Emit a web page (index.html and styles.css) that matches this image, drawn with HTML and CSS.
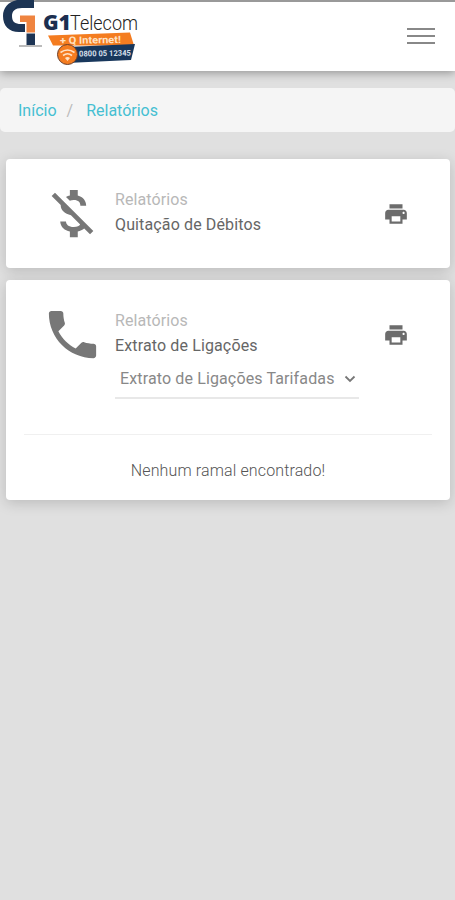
FILE: index.html
```html
<!DOCTYPE html>
<html lang="pt-BR">
<head>
<meta charset="utf-8">
<meta name="viewport" content="width=device-width, initial-scale=1">
<title>Relatórios</title>
<link rel="stylesheet" href="styles.css">
</head>
<body>
<header class="topbar">
  <svg class="logo" width="150" height="70" viewBox="0 0 150 70" role="img" aria-label="G1 Telecom">
    <path d="M17 0h17v8H22C15 8 12 11 12 16c0 6 3 8 9 8h4v8h-6C9 32 3 26 3 16 3 8 8 2 17 0z" fill="#1c3454"/>
    <path d="M20 15.500h15v17h-8.500V22H20z" fill="#ef8440"/>
    <path d="M26.500 33.500H35V45h-8.500z" fill="#1c3454"/>
    <path d="M19 45h23v2H19z" fill="#bbb"/>
    <text class="logo-g1" x="43" y="29.500" textLength="28" lengthAdjust="spacingAndGlyphs">G1</text>
    <text class="logo-name" x="70" y="29.500" textLength="68" lengthAdjust="spacingAndGlyphs">Telecom</text>
    <path d="M48 35.500L130 32.500l4 13H53z" fill="#f47c20"/>
    <path d="M67 47l68-3-4 16-64 3z" fill="#18375c"/>
    <text class="logo-tag" x="60" y="44" textLength="61" lengthAdjust="spacingAndGlyphs" transform="rotate(-1 60 44)">+ Q Internet!</text>
    <text class="logo-phone" x="79" y="56.500" textLength="52" lengthAdjust="spacingAndGlyphs" transform="rotate(-1 79 56)">0800 05 12345</text>
    <circle cx="67.500" cy="54.500" r="10" fill="#f47c20" stroke="#6b3f2a"/>
    <path d="M60.500 52.500q7-5 14 0M63 55.500q4.500-3.500 9 0" fill="none" stroke="#ffe2c4" stroke-width="1.600"/>
    <path d="M65 58q2.500-2 5 0l-2.500 3z" fill="#ffe2c4"/>
  </svg>
  <button class="menu" aria-label="Menu"><span></span><span></span><span></span></button>
</header>
<nav class="breadcrumb"><a>Início</a><span class="slash">/</span><a>Relatórios</a></nav>
<main>
  <section class="card card-debits">
    <div class="row">
      <svg class="icon" viewBox="0 0 24 24"><path d="M12.500 6.900c1.780 0 2.440.85 2.500 2.100h2.210c-.07-1.720-1.120-3.300-3.210-3.810V3h-3v2.160c-.53.12-1.030.3-1.480.54l1.470 1.470c.41-.17.91-.27 1.510-.27zM5.330 4.060L4.060 5.330 7.500 8.770c0 2.080 1.560 3.210 3.910 3.910l3.510 3.510c-.34.48-1.050.91-2.420.91-2.060 0-2.870-.92-2.980-2.100h-2.200c.12 2.190 1.760 3.420 3.680 3.830V21h3v-2.150c.96-.18 1.820-.55 2.450-1.120l2.220 2.220 1.270-1.270L5.330 4.060z"/></svg>
      <div class="info"><p class="category">Relatórios</p><h2>Quitação de Débitos</h2></div>
      <svg class="print" viewBox="0 0 24 24"><path d="M19 8H5c-1.660 0-3 1.340-3 3v6h4v4h12v-4h4v-6c0-1.660-1.340-3-3-3zm-3 11H8v-5h8v5zm3-7c-.55 0-1-.45-1-1s.45-1 1-1 1 .45 1 1-.45 1-1 1zm-1-9H6v4h12V3z"/></svg>
    </div>
  </section>
  <section class="card card-calls">
    <div class="row">
      <svg class="icon" viewBox="0 0 24 24"><path d="M6.620 10.790c1.440 2.830 3.760 5.140 6.590 6.590l2.200-2.200c.27-.27.67-.36 1.020-.24 1.120.37 2.330.57 3.570.57.55 0 1 .45 1 1V20c0 .55-.45 1-1 1-9.390 0-17-7.610-17-17 0-.55.45-1 1-1h3.500c.55 0 1 .45 1 1 0 1.250.2 2.450.57 3.570.11.35.03.74-.25 1.020l-2.200 2.200z"/></svg>
      <div class="info"><p class="category">Relatórios</p><h2>Extrato de Ligações</h2>
        <div class="select"><span>Extrato de Ligações Tarifadas</span><svg width="12" height="8" viewBox="0 0 12 8"><path d="M1.500 1.500L6 6l4.500-4.500"/></svg></div>
      </div>
      <svg class="print" viewBox="0 0 24 24"><path d="M19 8H5c-1.660 0-3 1.340-3 3v6h4v4h12v-4h4v-6c0-1.660-1.340-3-3-3zm-3 11H8v-5h8v5zm3-7c-.55 0-1-.45-1-1s.45-1 1-1 1 .45 1 1-.45 1-1 1zm-1-9H6v4h12V3z"/></svg>
    </div>
    <p class="empty">Nenhum ramal encontrado!</p>
  </section>
</main>
</body>
</html>
```
FILE: styles.css
```css
* { box-sizing: border-box; }
body {
  margin: 0;
  min-height: 900px;
  background: #e0e0e0;
  font-family: Roboto, "Liberation Sans", sans-serif;
  font-size: 16px;
  overflow-x: hidden;
}
h2, p { margin: 0; }
.topbar {
  height: 71px;
  display: flex;
  justify-content: space-between;
  align-items: flex-start;
  background: #fff;
  border-top: 2px solid #999;
  box-shadow: 0 2px 9px rgba(0, 0, 0, .34);
}
.logo { display: block; margin-top: -2px; }
.logo text { font-family: Roboto, sans-serif; }
.logo .logo-g1 { font-family: "Open Sans", sans-serif; font-size: 21px; font-weight: 800; fill: #1c2f50; }
.logo .logo-name { font-size: 21px; font-weight: 300; fill: #222; }
.logo .logo-tag { font-size: 10px; font-weight: 700; fill: #ffe2c4; }
.logo .logo-phone { font-size: 8px; font-weight: 700; fill: #d5dfe9; }
.menu {
  display: flex;
  flex-direction: column;
  gap: 5px;
  width: 28px;
  margin: 26px 20px 0 0;
  padding: 0;
  border: 0;
  background: none;
}
.menu span { width: 28px; height: 2px; background: #888; }
.breadcrumb {
  display: flex;
  align-items: center;
  height: 44px;
  margin-top: 17px;
  padding: 0 18px;
  border-radius: 5px;
  background: #f5f5f5;
  color: #45bfd2;
}
.slash { margin: 0 13px 0 10px; color: #bbb; }
main { padding: 27px 5px 0 6px; }
.card {
  border-radius: 4px;
  background: #fff;
  box-shadow: 0 3px 14px rgba(0, 0, 0, .17);
}
.card-debits { height: 109px; margin-bottom: 12px; padding-top: 23px; }
.card-calls { height: 220px; padding-top: 23px; }
.row { display: flex; align-items: flex-start; padding: 0 41px 0 35px; }
.icon { width: 63px; height: 63px; flex: none; fill: #777; }
.info { flex: 1; margin-left: 11px; padding-top: 6px; }
.category, h2 { font-size: 16px; line-height: 24.500px; font-weight: 400; white-space: nowrap; }
.category { letter-spacing: .1px; color: #b8b8b8; }
h2 { letter-spacing: .13px; color: #666; }
.print { width: 26px; height: 26px; flex: none; margin-top: 19px; fill: #6c6c6c; }
.select {
  display: flex;
  align-items: center;
  justify-content: space-between;
  width: 244px;
  height: 41px;
  padding: 2px 3px 0 5px;
  border-bottom: 2px solid #e8e8e8;
  letter-spacing: .13px;
  color: #888;
  white-space: nowrap;
}
.select svg { fill: none; stroke: #777; stroke-width: 1.800; }
.empty {
  margin: 35px 18px 0;
  padding-top: 24px;
  border-top: 1px solid #f0f0f0;
  text-align: center;
  line-height: 24px;
  font-weight: 300;
  letter-spacing: .13px;
  color: #555;
}
```
